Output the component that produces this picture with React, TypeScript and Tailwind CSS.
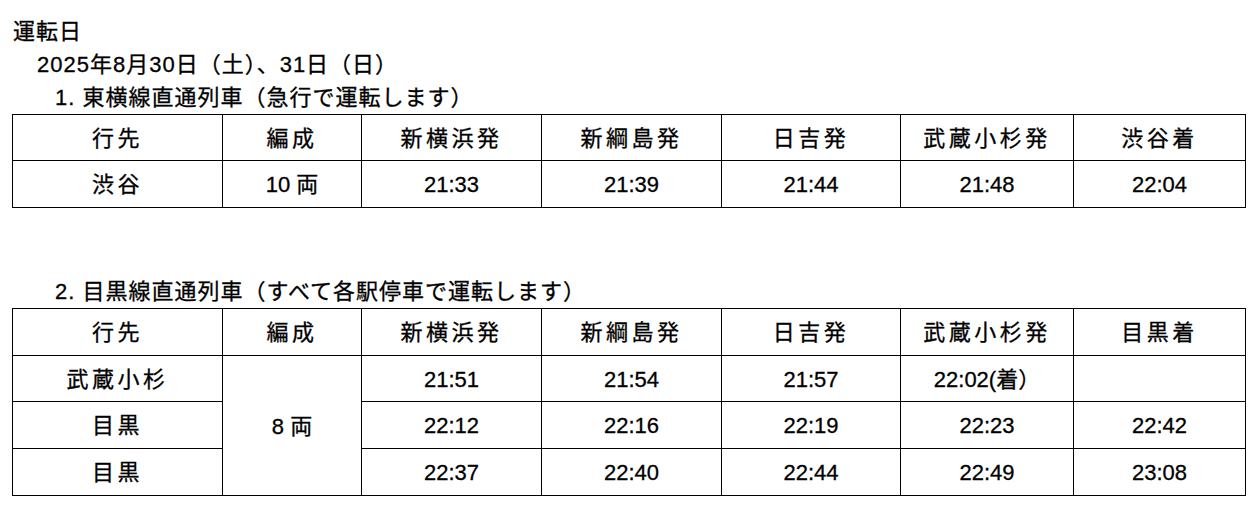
import React from "react";

const FONT = '"Liberation Sans", "Noto Sans CJK JP", sans-serif';

const widths = [210, 139, 180, 180, 179, 173, 172];

function J({ children }: { children: React.ReactNode }) {
  return <span className="tracking-[3.5px]">{children}</span>;
}

function Cell({ children, rowSpan }: { children?: React.ReactNode; rowSpan?: number }) {
  return (
    <td
      rowSpan={rowSpan}
      className="border border-black text-center align-middle p-0 pt-[2px] text-[22px] leading-none"
    >
      {children}
    </td>
  );
}

function Table({ children }: { children: React.ReactNode }) {
  return (
    <table className="ml-[12px] w-[1234px] table-fixed border-collapse">
      <colgroup>
        {widths.map((w, i) => (
          <col key={i} style={{ width: w }} />
        ))}
      </colgroup>
      <tbody>{children}</tbody>
    </table>
  );
}

export default function App() {
  return (
    <div
      className="w-[1260px] h-[508px] bg-white text-black overflow-hidden pt-[15px] [-webkit-text-stroke:0.3px_black]"
      style={{ fontFamily: FONT }}
    >
      <div className="text-[22px] leading-[33px] tracking-[1px] pl-[13px]">運転日</div>
      <div className="text-[22px] leading-[33px] tracking-[1px] pl-[37px]">2025年8月30日（土）、31日（日）</div>
      <div className="text-[22px] leading-[33px] tracking-[1px] pl-[55px]">1. 東横線直通列車（急行で運転します）</div>
      <Table>
        <tr className="h-[46px]">
          <Cell><J>行先</J></Cell>
          <Cell><J>編成</J></Cell>
          <Cell><J>新横浜発</J></Cell>
          <Cell><J>新綱島発</J></Cell>
          <Cell><J>日吉発</J></Cell>
          <Cell><J>武蔵小杉発</J></Cell>
          <Cell><J>渋谷着</J></Cell>
        </tr>
        <tr className="h-[47px]">
          <Cell><J>渋谷</J></Cell>
          <Cell>10 両</Cell>
          <Cell>21:33</Cell>
          <Cell>21:39</Cell>
          <Cell>21:44</Cell>
          <Cell>21:48</Cell>
          <Cell>22:04</Cell>
        </tr>
      </Table>
      <div className="text-[22px] leading-[33px] tracking-[1px] pl-[55px] mt-[67px]">
        2. 目黒線直通列車（すべて各駅停車で運転します）
      </div>
      <Table>
        <tr className="h-[47px]">
          <Cell><J>行先</J></Cell>
          <Cell><J>編成</J></Cell>
          <Cell><J>新横浜発</J></Cell>
          <Cell><J>新綱島発</J></Cell>
          <Cell><J>日吉発</J></Cell>
          <Cell><J>武蔵小杉発</J></Cell>
          <Cell><J>目黒着</J></Cell>
        </tr>
        <tr className="h-[46px]">
          <Cell><J>武蔵小杉</J></Cell>
          <Cell rowSpan={3}>8 両</Cell>
          <Cell>21:51</Cell>
          <Cell>21:54</Cell>
          <Cell>21:57</Cell>
          <Cell>22:02(着）</Cell>
          <Cell></Cell>
        </tr>
        <tr className="h-[47px]">
          <Cell><J>目黒</J></Cell>
          <Cell>22:12</Cell>
          <Cell>22:16</Cell>
          <Cell>22:19</Cell>
          <Cell>22:23</Cell>
          <Cell>22:42</Cell>
        </tr>
        <tr className="h-[47px]">
          <Cell><J>目黒</J></Cell>
          <Cell>22:37</Cell>
          <Cell>22:40</Cell>
          <Cell>22:44</Cell>
          <Cell>22:49</Cell>
          <Cell>23:08</Cell>
        </tr>
      </Table>
    </div>
  );
}
